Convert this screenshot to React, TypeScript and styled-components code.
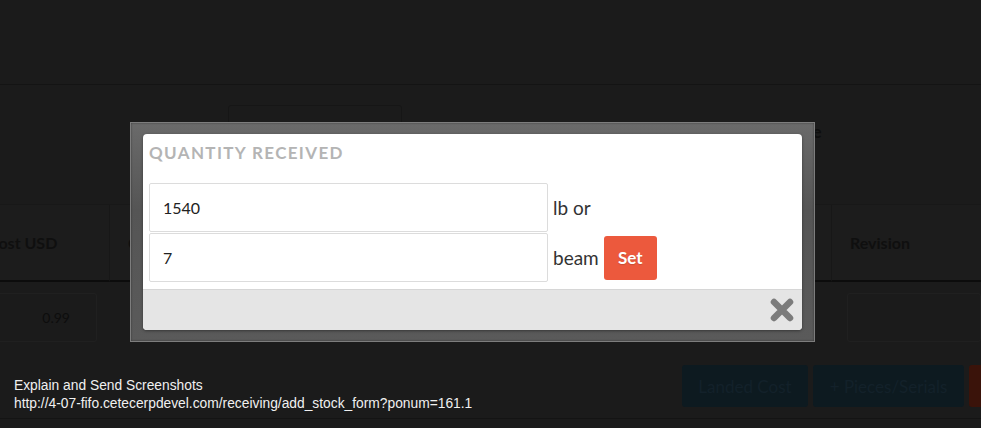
import React from 'react'
import styled, { createGlobalStyle } from 'styled-components'

const Global = createGlobalStyle`
  html, body {
    margin: 0;
    padding: 0;
    background: #1b1b1b;
    overflow: hidden;
  }
  * { box-sizing: border-box; }
`

const Page = styled.div`
  position: relative;
  width: 981px;
  height: 428px;
  background: #1b1b1b;
  font-family: Lato, "Noto Sans", sans-serif;
  overflow: hidden;
`

const TopBar = styled.div`
  height: 85px;
  border-bottom: 1px solid #141414;
`

const FilterBar = styled.div`
  height: 120px;
  display: flex;
  align-items: flex-start;
  padding: 20px 0 0 228px;
  border-bottom: 1px solid #181818;
`

const GhostInput = styled.div`
  width: 174px;
  height: 40px;
  border: 1px solid #161616;
  border-radius: 3px;
`

const FilterLabel = styled.span`
  margin: 16px 0 0 383px;
  font-weight: 700;
  font-size: 17px;
  color: #0e0e0e;
`

const Table = styled.div`
  margin-left: -30px;
  display: grid;
  grid-template-columns: 140px 722px 1fr;
`

const HeadCell = styled.div<{ $last?: boolean }>`
  height: 77px;
  display: flex;
  align-items: center;
  padding-left: 18px;
  font-weight: 700;
  font-size: 16px;
  color: #0f0f0f;
  background: #1c1c1c;
  border-right: ${p => (p.$last ? 'none' : '1px solid #171717')};
  border-bottom: 2px solid #0c0c0c;
`

const BodyCell = styled.div`
  height: 76px;
  padding: 11px 0 0 0;
`

const CellBox = styled.div<{ $w?: number; $ml?: number }>`
  width: ${p => (p.$w ? `${p.$w}px` : 'auto')};
  margin-left: ${p => p.$ml || 0}px;
  height: 49px;
  border: 1px solid #202020;
  border-radius: 3px;
  display: flex;
  align-items: center;
  justify-content: flex-end;
  padding-right: 26px;
  font-size: 14px;
  color: #0d0d0d;
`

const ActionRow = styled.div`
  display: flex;
  gap: 5px;
  padding: 7px 0 11px 682px;
  border-bottom: 1px solid #141414;
`

const GhostButton = styled.div<{ $w: number; $red?: boolean }>`
  flex: none;
  width: ${p => p.$w}px;
  height: 42px;
  border-radius: 3px;
  background: ${p => (p.$red ? '#3a130a' : '#0d1a20')};
  color: #13212a;
  font-size: 17px;
  display: flex;
  align-items: center;
  justify-content: center;
`

const Dialog = styled.div`
  position: absolute;
  left: 130px;
  top: 122px;
  width: 685px;
  height: 220px;
  padding: 11px 12px;
  background: linear-gradient(#6a6a6a, #555 40%, #5a5a5a);
  border: 1px solid #7d7d7d;
  box-shadow: inset 0 0 2px rgba(0, 0, 0, 0.5);
`

const Panel = styled.div`
  height: 100%;
  background: #fff;
  border-radius: 4px;
  overflow: hidden;
  display: flex;
  flex-direction: column;
  box-shadow: 0 1px 3px rgba(0, 0, 0, 0.4);
`

const Title = styled.h3`
  margin: 0;
  padding: 8px 6px 0;
  height: 49px;
  font-family: Lato, "Noto Sans", sans-serif;
  font-weight: 700;
  font-size: 17px;
  letter-spacing: 1.35px;
  color: #b4b4b4;
`

const Form = styled.div`
  padding: 0 6px;
  display: flex;
  flex-direction: column;
  gap: 1px;
`

const FieldRow = styled.div`
  display: flex;
  align-items: center;
  gap: 5px;
`

const Field = styled.input`
  width: 399px;
  height: 49px;
  border: 1px solid #dcdcdc;
  border-radius: 2px;
  padding: 0 13px;
  font-family: Lato, "Noto Sans", sans-serif;
  font-size: 16px;
  color: #222;
  outline: none;
`

const Unit = styled.span`
  font-size: 19px;
  color: #333;
`

const SetButton = styled.button`
  width: 53px;
  height: 44px;
  border: none;
  border-radius: 3px;
  background: #ec593d;
  color: #fff;
  font-family: Lato, "Noto Sans", sans-serif;
  font-weight: 700;
  font-size: 17px;
  text-shadow: 0 1px 1px rgba(0, 0, 0, 0.15);
`

const DialogFooter = styled.div`
  margin-top: auto;
  height: 41px;
  background: #e5e5e5;
  border-top: 1px solid #d6d6d6;
  display: flex;
  align-items: center;
  justify-content: flex-end;
  padding-right: 8px;
`

const Report = styled.div`
  position: absolute;
  left: 14px;
  top: 377px;
  font-family: "Liberation Sans", Arial, sans-serif;
  font-size: 13.8px;
  line-height: 18px;
  color: #f0f0f0;
`

function CloseIcon() {
  return (
    <svg width="24" height="24" viewBox="0 0 24 24">
      <path d="M4 4L20 20M20 4L4 20" stroke="#7b7b7b" strokeWidth="6.5" strokeLinecap="round" />
    </svg>
  )
}

export default function App() {
  return (
    <>
      <Global />
      <Page>
        <TopBar />
        <FilterBar>
          <GhostInput />
          <FilterLabel>Date</FilterLabel>
        </FilterBar>
        <Table>
          <HeadCell>Cost USD</HeadCell>
          <HeadCell>Cost</HeadCell>
          <HeadCell $last>Revision</HeadCell>
          <BodyCell>
            <CellBox $w={127} $ml={0}>0.99</CellBox>
          </BodyCell>
          <BodyCell />
          <BodyCell>
            <CellBox $ml={15} />
          </BodyCell>
        </Table>
        <ActionRow>
          <GhostButton $w={126}>Landed Cost</GhostButton>
          <GhostButton $w={151}>+ Pieces/Serials</GhostButton>
          <GhostButton $w={120} $red aria-label="Receive" />
        </ActionRow>

        <Dialog>
          <Panel>
            <Title>QUANTITY RECEIVED</Title>
            <Form>
              <FieldRow>
                <Field defaultValue="1540" />
                <Unit>lb or</Unit>
              </FieldRow>
              <FieldRow>
                <Field defaultValue="7" />
                <Unit>beam</Unit>
                <SetButton>Set</SetButton>
              </FieldRow>
            </Form>
            <DialogFooter>
              <CloseIcon />
            </DialogFooter>
          </Panel>
        </Dialog>

        <Report>
          Explain and Send Screenshots
          <br />
          http://4-07-fifo.cetecerpdevel.com/receiving/add_stock_form?ponum=161.1
        </Report>
      </Page>
    </>
  )
}
